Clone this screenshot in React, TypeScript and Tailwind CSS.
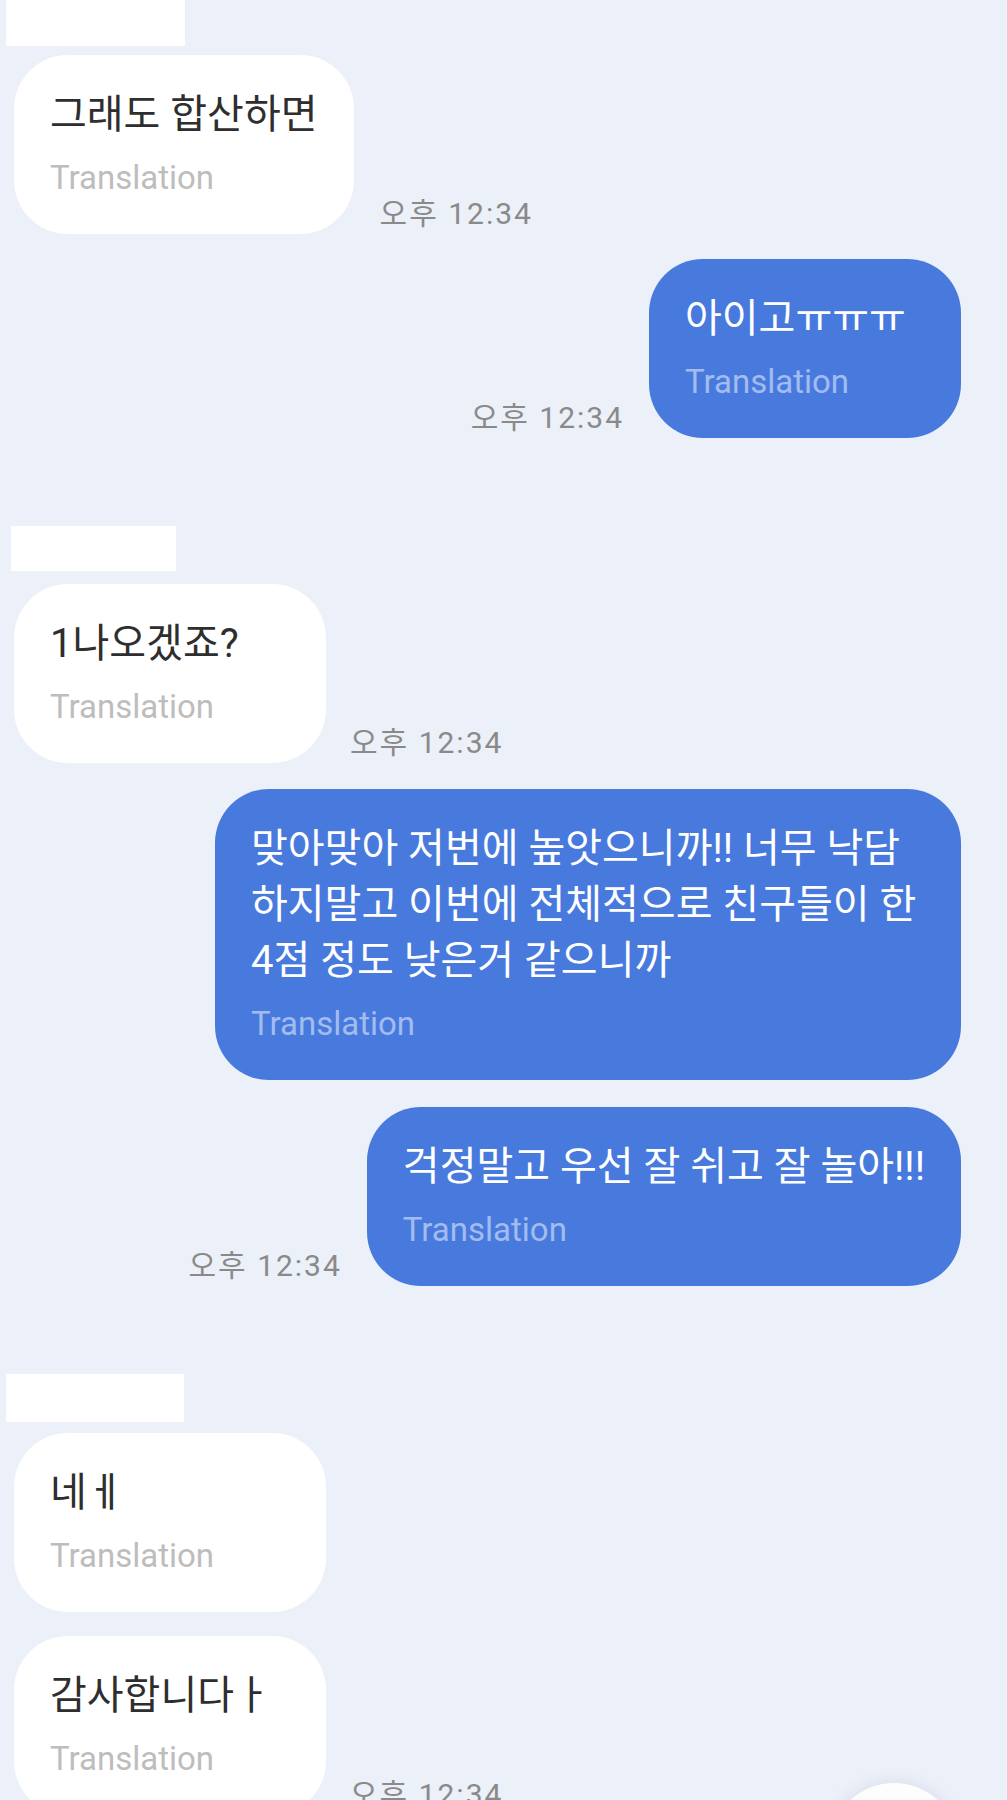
import React from "react";

type BubbleProps = { lines: string[]; blue?: boolean; wide?: boolean };

function Bubble({ lines, blue, wide }: BubbleProps) {
  const base = wide
    ? "w-[746px] rounded-[54px] pl-[36px] pr-[30px] pt-[32px] pb-[36px]"
    : "min-w-[312px] rounded-[54px] pl-[36px] pr-[36px] pt-[32px] pb-[36px]";
  return (
    <div className={blue ? base + " bg-[#487ADE]" : base + " bg-white"}>
      <div
        className={
          blue
            ? "whitespace-nowrap text-[40px] leading-[56px] text-white"
            : "whitespace-nowrap text-[40px] leading-[56px] text-[#2E2E2E]"
        }
      >
        {lines.map((l, i) => (
          <div key={i}>{l}</div>
        ))}
      </div>
      <div
        className={
          blue
            ? "mt-[15px] text-[33px] leading-[40px] text-[#A3BCEF]"
            : "mt-[15px] text-[33px] leading-[40px] text-[#BDBDBD]"
        }
      >
        Translation
      </div>
    </div>
  );
}

function Time() {
  return (
    <div className="mb-[2px] shrink-0 whitespace-nowrap text-[30px] leading-[36px] tracking-[2px] text-[#8A8A8A]">
      오후 12:34
    </div>
  );
}

export default function App() {
  return (
    <div className="relative h-[1800px] w-[1007px] overflow-hidden bg-[#ECF0F9] font-[Roboto,'Noto_Sans_CJK_KR',sans-serif]">
      <div className="flex flex-col pr-[46px]">
        <div className="ml-[6px] h-[46px] w-[179px] bg-white" />
        <div className="mt-[9px] ml-[14px] flex items-end gap-[26px]">
          <Bubble lines={["그래도 합산하면"]} />
          <Time />
        </div>
        <div className="mt-[25px] flex items-end justify-end gap-[25px]">
          <Time />
          <Bubble lines={["아이고ㅠㅠㅠ"]} blue />
        </div>

        <div className="mt-[88px] ml-[11px] h-[45px] w-[165px] bg-white" />
        <div className="mt-[13px] ml-[14px] flex items-end gap-[24px]">
          <Bubble lines={["1나오겠죠?"]} />
          <Time />
        </div>
        <div className="mt-[26px] flex justify-end">
          <Bubble
            lines={[
              "맞아맞아 저번에 높앗으니까!! 너무 낙담",
              "하지말고 이번에 전체적으로 친구들이 한",
              "4점 정도 낮은거 같으니까",
            ]}
            blue
            wide
          />
        </div>
        <div className="mt-[27px] flex items-end justify-end gap-[25px]">
          <Time />
          <Bubble lines={["걱정말고 우선 잘 쉬고 잘 놀아!!!"]} blue />
        </div>

        <div className="mt-[88px] ml-[6px] h-[48px] w-[178px] bg-white" />
        <div className="mt-[11px] ml-[14px] flex">
          <Bubble lines={["네ㅔ"]} />
        </div>
        <div className="mt-[24px] ml-[14px] flex items-end gap-[24px]">
          <Bubble lines={["감사합니다ㅏ"]} />
          <Time />
        </div>
      </div>
      <div className="absolute left-[829px] top-[1783px] h-[130px] w-[130px] rounded-full bg-[#FDFDFD] shadow-[0_0_16px_rgba(120,130,160,0.18)]" />
    </div>
  );
}
